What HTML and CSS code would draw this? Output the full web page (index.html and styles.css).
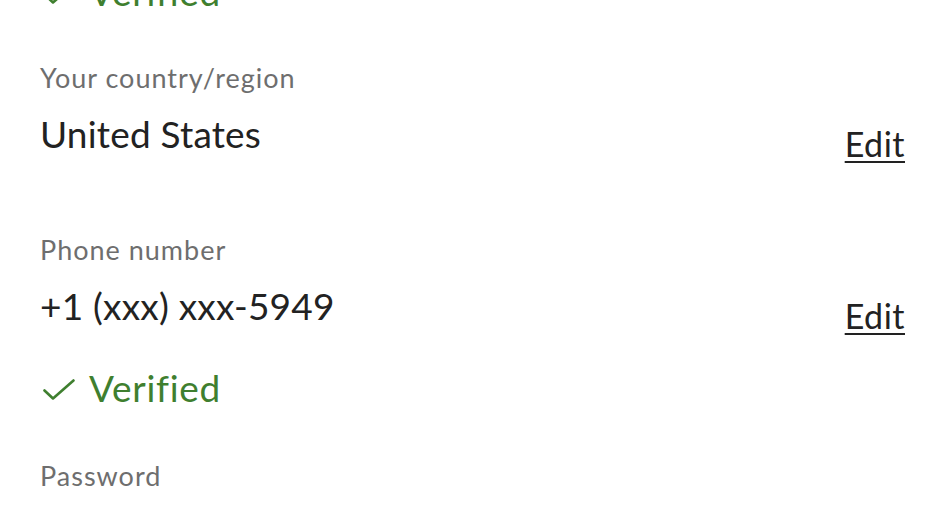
FILE: index.html
```html
<!DOCTYPE html>
<html lang="en">
<head>
<meta charset="utf-8">
<link rel="stylesheet" href="styles.css">
</head>
<body>
<main class="page">
  <div class="verified verified-top">
    <svg class="check" viewBox="0 0 32 22" width="32" height="22"><path d="M1.5 11.5 L10 19.5 L30.5 1.5" fill="none" stroke="currentColor" stroke-width="2.6" stroke-linecap="round" stroke-linejoin="round"/></svg>
    <span>Verified</span>
  </div>

  <section class="field">
    <div class="label">Your country/region</div>
    <div class="row">
      <div class="value">United States</div>
      <a class="edit" href="#">Edit</a>
    </div>
  </section>

  <section class="field">
    <div class="label">Phone number</div>
    <div class="row">
      <div class="value">+1 (xxx) xxx-5949</div>
      <a class="edit" href="#">Edit</a>
    </div>
    <div class="verified">
      <svg class="check" viewBox="0 0 32 22" width="32" height="22"><path d="M1.5 11.5 L10 19.5 L30.5 1.5" fill="none" stroke="currentColor" stroke-width="2.6" stroke-linecap="round" stroke-linejoin="round"/></svg>
      <span>Verified</span>
    </div>
  </section>

  <section class="field">
    <div class="label">Password</div>
  </section>
</main>
</body>
</html>
```

FILE: styles.css
```css
html, body {
  margin: 0;
  padding: 0;
  background: #ffffff;
}
body {
  font-family: Lato, "Noto Sans", sans-serif;
  color: #222222;
  overflow: hidden;
}
.page {
  padding: 0 40px;
  margin-top: -32px;
}
.verified {
  display: flex;
  align-items: center;
  gap: 14px;
  color: #3f7f2f;
  font-size: 37px;
  line-height: 48px;
  height: 48px;
  letter-spacing: 0.7px;
}
.verified .check {
  margin-left: 3px;
  margin-top: 4px;
  flex: none;
}
.field {
  padding-top: 44px;
}
.label {
  color: #6e6e6e;
  font-size: 27px;
  line-height: 36px;
  letter-spacing: 1px;
}
.row {
  display: flex;
  justify-content: space-between;
  align-items: flex-start;
  margin-top: 14px;
}
.value {
  font-size: 37px;
  line-height: 48px;
  letter-spacing: 0.2px;
}
.edit {
  color: #222222;
  font-size: 34px;
  line-height: 48px;
  margin-top: 10px;
  letter-spacing: 0.5px;
  text-decoration: underline;
  text-decoration-thickness: 2px;
  text-underline-offset: 4px;
}
.field + .field {
  padding-top: 64px;
}
.field .verified {
  margin-top: 24px;
}
.field:last-child {
  padding-top: 46px;
}
```
